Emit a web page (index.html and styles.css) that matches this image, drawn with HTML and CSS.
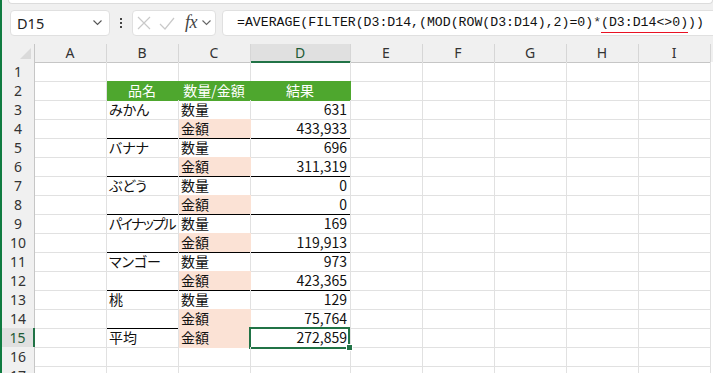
FILE: index.html
```html
<!DOCTYPE html>
<html lang="ja">
<head>
    <meta charset="UTF-8">
    <title>AVERAGE FILTER - Excel</title>
    <link rel="stylesheet" href="styles.css">
</head>
<body>
<div class="app">
    <div class="ribbon"></div>

    <div class="fbar">
        <div class="namebox">
            <span>D15</span>
            <svg class="chev" width="9" height="6" viewBox="0 0 9 6"><polyline points="0.5,0.5 4.5,4.5 8.5,0.5" fill="none" stroke="#555" stroke-width="1.1"/></svg>
        </div>
        <div class="grip">
            <svg width="4" height="12" viewBox="0 0 4 12"><rect x="1" y="1" width="2" height="2" fill="#444"/><rect x="1" y="5" width="2" height="2" fill="#444"/><rect x="1" y="9" width="2" height="2" fill="#444"/></svg>
        </div>
        <div class="fxbox">
            <svg class="ico" width="14" height="14" viewBox="0 0 14 14"><path d="M1 1 L13 13 M13 1 L1 13" stroke="#c9c9c9" stroke-width="1.2" fill="none"/></svg>
            <svg class="ico" width="16" height="13" viewBox="0 0 16 13"><polyline points="1,7 6,12 15,1" stroke="#c9c9c9" stroke-width="1.2" fill="none"/></svg>
            <span class="fx">fx</span>
            <svg class="chev" width="9" height="6" viewBox="0 0 9 6"><polyline points="0.5,0.5 4.5,4.5 8.5,0.5" fill="none" stroke="#666" stroke-width="1.1"/></svg>
        </div>
        <div class="formula">=AVERAGE(FILTER(D3:D14,(MOD(ROW(D3:D14),2)=0)<span class="op">*</span><span class="err">(D3:D14&lt;&gt;0)</span>))</div>
    </div>

    <div class="sheet">
        <div class="row head">
            <div class="c corner"></div>
            <div class="c">A</div><div class="c">B</div><div class="c">C</div><div class="c selcol">D</div>
            <div class="c">E</div><div class="c">F</div><div class="c">G</div><div class="c">H</div><div class="c">I</div>
        </div>
        <div class="row">
            <div class="c rh">1</div>
            <div class="c"></div><div class="c"></div><div class="c"></div><div class="c"></div>
            <div class="c"></div><div class="c"></div><div class="c"></div><div class="c"></div><div class="c"></div>
        </div>
        <div class="row">
            <div class="c rh">2</div>
            <div class="c"></div><div class="c hd">品名</div><div class="c hd">数量/金額</div><div class="c hd">結果</div>
            <div class="c"></div><div class="c"></div><div class="c"></div><div class="c"></div><div class="c"></div>
        </div>
        <div class="row">
            <div class="c rh">3</div>
            <div class="c"></div><div class="c">みかん</div><div class="c">数量</div><div class="c num">631</div>
            <div class="c"></div><div class="c"></div><div class="c"></div><div class="c"></div><div class="c"></div>
        </div>
        <div class="row">
            <div class="c rh">4</div>
            <div class="c"></div><div class="c line"></div><div class="c pe line">金額</div><div class="c num line">433,933</div>
            <div class="c"></div><div class="c"></div><div class="c"></div><div class="c"></div><div class="c"></div>
        </div>
        <div class="row">
            <div class="c rh">5</div>
            <div class="c"></div><div class="c">バナナ</div><div class="c">数量</div><div class="c num">696</div>
            <div class="c"></div><div class="c"></div><div class="c"></div><div class="c"></div><div class="c"></div>
        </div>
        <div class="row">
            <div class="c rh">6</div>
            <div class="c"></div><div class="c line"></div><div class="c pe line">金額</div><div class="c num line">311,319</div>
            <div class="c"></div><div class="c"></div><div class="c"></div><div class="c"></div><div class="c"></div>
        </div>
        <div class="row">
            <div class="c rh">7</div>
            <div class="c"></div><div class="c">ぶどう</div><div class="c">数量</div><div class="c num">0</div>
            <div class="c"></div><div class="c"></div><div class="c"></div><div class="c"></div><div class="c"></div>
        </div>
        <div class="row">
            <div class="c rh">8</div>
            <div class="c"></div><div class="c line"></div><div class="c pe line">金額</div><div class="c num line">0</div>
            <div class="c"></div><div class="c"></div><div class="c"></div><div class="c"></div><div class="c"></div>
        </div>
        <div class="row">
            <div class="c rh">9</div>
            <div class="c"></div><div class="c tight">パイナップル</div><div class="c">数量</div><div class="c num">169</div>
            <div class="c"></div><div class="c"></div><div class="c"></div><div class="c"></div><div class="c"></div>
        </div>
        <div class="row">
            <div class="c rh">10</div>
            <div class="c"></div><div class="c line"></div><div class="c pe line">金額</div><div class="c num line">119,913</div>
            <div class="c"></div><div class="c"></div><div class="c"></div><div class="c"></div><div class="c"></div>
        </div>
        <div class="row">
            <div class="c rh">11</div>
            <div class="c"></div><div class="c">マンゴー</div><div class="c">数量</div><div class="c num">973</div>
            <div class="c"></div><div class="c"></div><div class="c"></div><div class="c"></div><div class="c"></div>
        </div>
        <div class="row">
            <div class="c rh">12</div>
            <div class="c"></div><div class="c line"></div><div class="c pe line">金額</div><div class="c num line">423,365</div>
            <div class="c"></div><div class="c"></div><div class="c"></div><div class="c"></div><div class="c"></div>
        </div>
        <div class="row">
            <div class="c rh">13</div>
            <div class="c"></div><div class="c">桃</div><div class="c">数量</div><div class="c num">129</div>
            <div class="c"></div><div class="c"></div><div class="c"></div><div class="c"></div><div class="c"></div>
        </div>
        <div class="row">
            <div class="c rh">14</div>
            <div class="c"></div><div class="c line"></div><div class="c pe line">金額</div><div class="c num line">75,764</div>
            <div class="c"></div><div class="c"></div><div class="c"></div><div class="c"></div><div class="c"></div>
        </div>
        <div class="row">
            <div class="c rh selrow">15</div>
            <div class="c"></div><div class="c">平均</div><div class="c pe">金額</div><div class="c num sel">272,859<span class="handle"></span></div>
            <div class="c"></div><div class="c"></div><div class="c"></div><div class="c"></div><div class="c"></div>
        </div>
        <div class="row">
            <div class="c rh">16</div>
            <div class="c"></div><div class="c"></div><div class="c"></div><div class="c"></div>
            <div class="c"></div><div class="c"></div><div class="c"></div><div class="c"></div><div class="c"></div>
        </div>
        <div class="row">
            <div class="c rh">17</div>
            <div class="c"></div><div class="c"></div><div class="c"></div><div class="c"></div>
            <div class="c"></div><div class="c"></div><div class="c"></div><div class="c"></div><div class="c"></div>
        </div>
    </div>
</div>
</body>
</html>
```

FILE: styles.css
```css
body {
    margin: 0;
    padding: 0;
    background-color: #fff;
}
.app {
    width: 713px;
    height: 373px;
    overflow: hidden;
    box-sizing: border-box;
    border-left: 2px solid #107c41;
    background-color: #f0f0f0;
    font-family: "Noto Sans", "Noto Sans CJK JP", sans-serif;
}

/* ribbon bottom edge */
.ribbon {
    height: 3px;
    margin-left: 6px;
    background-color: #fff;
    border: 1px solid #dcdcdc;
    border-top: none;
    border-radius: 0 0 6px 6px;
}

/* formula bar */
.fbar {
    display: flex;
    align-items: center;
    height: 26px;
    margin: 6px 0 8px 8px;
}
.namebox {
    width: 100px;
    height: 26px;
    box-sizing: border-box;
    display: flex;
    align-items: center;
    justify-content: space-between;
    padding: 0 7px 0 6px;
    background-color: #fff;
    border: 1px solid #e0e0e0;
    border-radius: 4px;
    font-size: 14.5px;
    color: #222;
}
.grip {
    width: 22px;
    display: flex;
    justify-content: center;
}
.grip svg {
    display: block;
}
.fxbox {
    width: 84px;
    height: 26px;
    box-sizing: border-box;
    display: flex;
    align-items: center;
    padding-left: 4px;
    border: 1px solid #e0e0e0;
    border-radius: 4px;
    background-color: #fff;
}
.fxbox .ico {
    display: block;
    margin-right: 8px;
}
.fxbox .fx {
    font-family: "Liberation Serif", serif;
    font-style: italic;
    font-size: 18px;
    color: #444;
    margin: -2px 5px 0 2px;
    letter-spacing: -0.5px;
}
.chev {
    display: block;
}
.formula {
    flex: 1;
    height: 26px;
    box-sizing: border-box;
    margin-left: 6px;
    margin-right: -10px;
    padding-left: 14px;
    background-color: #fff;
    border: 1px solid #e0e0e0;
    border-radius: 4px;
    font-family: "Liberation Mono", monospace;
    font-size: 13.2px;
    line-height: 24px;
    color: #111;
    white-space: nowrap;
}
.formula .op {
    color: #333;
}
.formula .err {
    display: inline-block;
    line-height: 16px;
    padding-bottom: 1px;
    border-bottom: 1px solid #e81123;
}

/* sheet grid */
.sheet {
    background-color: #fff;
}
.row {
    display: grid;
    grid-template-columns: 33px 72px 72px 72px 100px 72px 72px 72px 72px 72px;
    height: 19px;
}
.c {
    box-sizing: border-box;
    position: relative;
    border-right: 1px solid #e1e1e1;
    border-bottom: 1px solid #e1e1e1;
    padding: 0 3px 0 2px;
    font-family: "Noto Sans CJK JP", sans-serif;
    font-feature-settings: "palt";
    font-size: 14px;
    line-height: 19px;
    color: #111;
    white-space: nowrap;
}
.c.tight {
    letter-spacing: -1.6px;
}
.head {
    height: 18px;
    background-color: #f0f0f0;
}
.head .c {
    border-right-color: #d6d6d6;
    border-bottom-color: #c6c6c6;
    text-align: center;
    font-family: "Noto Sans", sans-serif;
    font-size: 14px;
    line-height: 17px;
    color: #333;
}
.head .corner {
    border-right-color: #c6c6c6;
}
.head .corner::after {
    content: "";
    position: absolute;
    right: 3px;
    bottom: 3px;
    border-style: solid;
    border-width: 0 0 11px 11px;
    border-color: transparent transparent #dadada transparent;
}
.head .selcol {
    background-color: #e0e0e0;
    border-bottom: 2px solid #217346;
    color: #1e5b36;
}
.rh {
    background-color: #f0f0f0;
    border-right-color: #c6c6c6;
    border-bottom-color: #dcdcdc;
    text-align: center;
    font-family: "Noto Sans", sans-serif;
    font-size: 14px;
    color: #333;
    padding: 0;
}
.rh.selrow {
    background-color: #e0e0e0;
    border-right: 2px solid #217346;
    color: #1e5b36;
}
.num {
    text-align: right;
}
.hd {
    background-color: #4ea72e;
    border-color: #4ea72e;
    color: #fff;
    text-align: center;
}
.pe {
    background-color: #fbe2d5;
    border-color: #fbe2d5;
}
.line {
    border-bottom-color: #000;
}
.sel::after {
    content: "";
    position: absolute;
    top: -1px;
    left: -2px;
    right: 0;
    bottom: -2px;
    border: 2px solid #217346;
}
.handle {
    position: absolute;
    right: -3px;
    bottom: -4px;
    width: 5px;
    height: 5px;
    background-color: #217346;
    border: 1px solid #fff;
    z-index: 2;
}
```
